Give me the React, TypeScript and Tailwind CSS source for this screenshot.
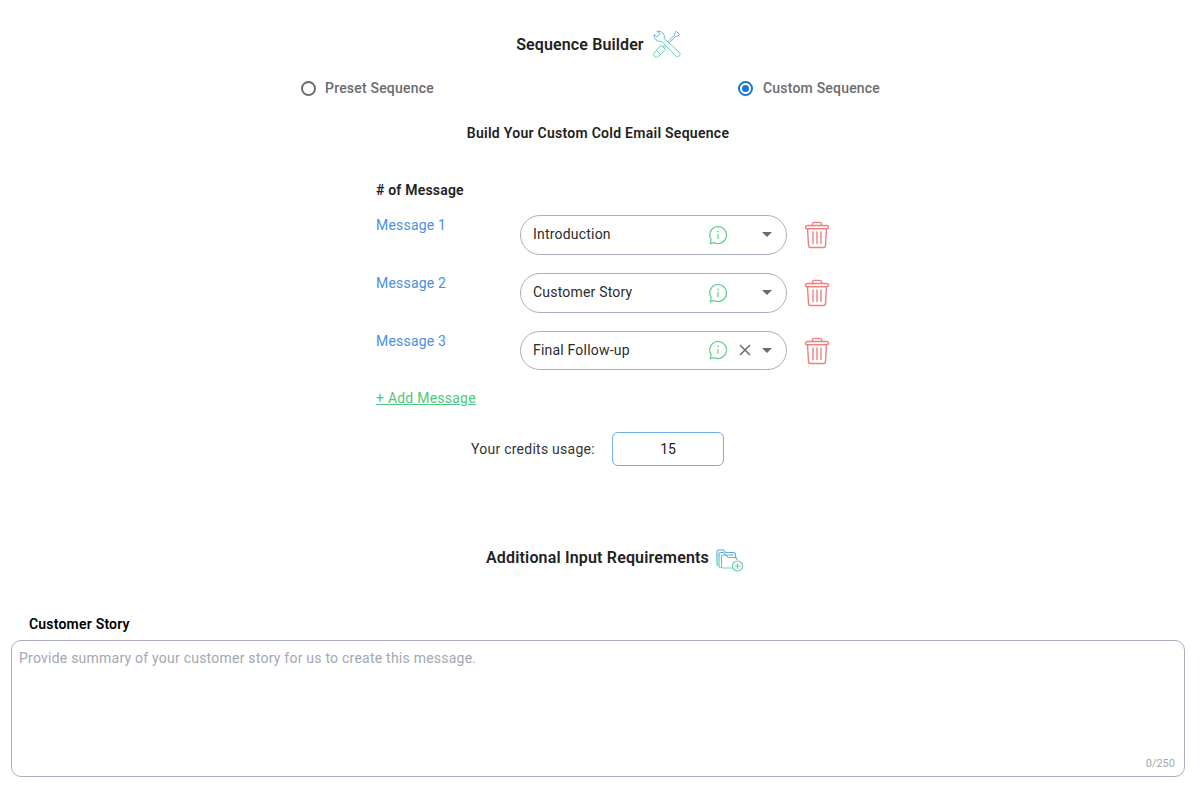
const FONT = { fontFamily: "Roboto, sans-serif" };

function ToolsIcon() {
  return (
    <svg width="28" height="28" viewBox="0 0 28 28" fill="none" strokeWidth="1" strokeLinejoin="round" strokeLinecap="round">
      <defs>
        <linearGradient id="toolsGrad" gradientUnits="userSpaceOnUse" x1="14" y1="1" x2="14" y2="27">
          <stop offset="0" stopColor="#5aa9e6" />
          <stop offset="1" stopColor="#6fdc9a" />
        </linearGradient>
      </defs>
      <g stroke="url(#toolsGrad)">
        {/* screwdriver, tip top right, handle bottom left */}
        <path d="M23.500 1.500L26.500 4.500L25 6L22.500 6.500L11.200 18.200L9.800 16.800L21 5.500L22 3z" />
        <path d="M8.500 15.500L12.500 19.500L5.500 26.500A2.400 2.400 0 0 1 1.500 22.500z" />
        <path d="M3.500 20.500l4 4" />
        {/* wrench, head top left */}
        <path
          fill="white"
          d="M4.500 1.300L7 3.800L3.800 7L1.300 4.500A5.800 5.800 0 0 0 8.600 11.200L22.600 26A2.600 2.600 0 0 0 26.400 22.400L11.200 8.600A5.800 5.800 0 0 0 4.500 1.300z"
        />
      </g>
    </svg>
  );
}

function FolderIcon() {
  return (
    <svg width="28" height="24" viewBox="0 0 28 24" fill="none" strokeWidth="1.200" strokeLinejoin="round" strokeLinecap="round">
      <defs>
        <linearGradient id="folderGrad" gradientUnits="userSpaceOnUse" x1="12" y1="1" x2="12" y2="23">
          <stop offset="0" stopColor="#5aa9e6" />
          <stop offset="1" stopColor="#6fdc9a" />
        </linearGradient>
      </defs>
      <g stroke="url(#folderGrad)">
        <path d="M2 16.500A1.500 1.500 0 0 1 1 15V2.500A1.500 1.500 0 0 1 2.500 1h5l2 2.500h8A2 2 0 0 1 19.500 5.500V9" />
        <path d="M4.500 18.500A1.500 1.500 0 0 1 3 17V5a1.500 1.500 0 0 1 1.500-1.500h3l2 2.500h8" />
        <path d="M17 19H7a1.500 1.500 0 0 1-1.500-1.500V7.500A1.500 1.500 0 0 1 7 6h3l2 2.500h7a2 2 0 0 1 2 2" />
        <circle cx="21.500" cy="17" r="5" fill="white" />
        <path d="M21.500 14.500v5M19 17h5" />
      </g>
    </svg>
  );
}

function InfoBubble() {
  return (
    <svg width="20" height="20" viewBox="0 0 20 20" fill="none" stroke="#5fd08a" strokeWidth="1.200" strokeLinejoin="round" strokeLinecap="round">
      <path d="M10 1.500a8.500 8.500 0 1 1-3.600 16.200L2.200 18.600l1-3.900A8.500 8.500 0 0 1 10 1.500z" />
      <path d="M10 9.500v4" />
      <path d="M10 6.400v.2" strokeWidth="1.600" />
    </svg>
  );
}

function TrashIcon() {
  return (
    <svg width="26" height="28" viewBox="0 0 26 28" fill="none" stroke="#f08080" strokeWidth="1.400" strokeLinejoin="round" strokeLinecap="round">
      <path d="M1.500 6.500c0-1.200.8-2 2-2h19c1.200 0 2 .8 2 2s-.8 1.200-2 1.200h-19c-1.200 0-2 0-2-1.200z" />
      <path d="M8.500 4.500V3a1.600 1.600 0 0 1 1.600-1.600h5.800A1.600 1.600 0 0 1 17.500 3v1.500" />
      <path d="M3.500 7.700l1 16.800a2 2 0 0 0 2 2h13a2 2 0 0 0 2-2l1-16.800" />
      <path d="M9 11v11.500M13 11v11.500M17 11v11.500" />
    </svg>
  );
}

function CloseIcon() {
  return (
    <svg width="12" height="12" viewBox="0 0 12 12" fill="none" stroke="#6b6b6b" strokeWidth="1.500">
      <path d="M1 1l10 10M11 1L1 11" />
    </svg>
  );
}

const messages = [
  { label: "Message 1", value: "Introduction", clear: false },
  { label: "Message 2", value: "Customer Story", clear: false },
  { label: "Message 3", value: "Final Follow-up", clear: true },
];

function MessageRow({ label, value, clear }: { label: string; value: string; clear: boolean }) {
  return (
    <div className="flex items-start h-[39.75px]">
      <div className="w-[144px] text-[14px] leading-[20px] tracking-[0.2px] text-[#4a8fe0]">{label}</div>
      <div className="flex items-center w-[267px] h-[39.75px] rounded-[20px] border border-[#a9b0bd] pl-[12px] pr-[10px]">
        <span className="text-[14px] tracking-[0.2px] text-[#2b2b2b] flex-1">{value}</span>
        <InfoBubble />
        <span className="w-[34px] flex justify-center">{clear && <CloseIcon />}</span>
        <span className="w-0 h-0 mr-[4px] border-l-[5px] border-r-[5px] border-t-[5px] border-l-transparent border-r-transparent border-t-[#6b6b6b]" />
      </div>
      <div className="ml-[17px] mt-[6px]">
        <TrashIcon />
      </div>
    </div>
  );
}

export default function App() {
  return (
    <div className="w-[1200px] h-[800px] overflow-hidden bg-white" style={FONT}>
      <div className="flex items-center justify-center h-[30px] mt-[29px] pr-[3px] gap-[9px]">
        <span className="mt-[2px] text-[16px] font-semibold tracking-[0.12px] text-[#222]">Sequence Builder</span>
        <ToolsIcon />
      </div>

      <div className="flex h-[20px] mt-[19px]">
        <label className="flex items-center ml-[301px] w-[437px] gap-[9px]">
          <span className="w-[15px] h-[15px] rounded-full border-2 border-[#6b6b6b]" />
          <span className="text-[14px] font-medium tracking-[0.2px] text-[#6b6b6b]">Preset Sequence</span>
        </label>
        <label className="flex items-center gap-[10px]">
          <span className="w-[15px] h-[15px] rounded-full border-2 border-[#1976d2] flex items-center justify-center">
            <span className="w-[7px] h-[7px] rounded-full bg-[#1976d2]" />
          </span>
          <span className="text-[14px] font-medium tracking-[0.2px] text-[#6b6b6b]">Custom Sequence</span>
        </label>
      </div>

      <div className="mt-[25px] h-[20px] pr-[4px] text-center text-[14px] leading-[20px] font-semibold tracking-[0.27px] text-[#222]">
        Build Your Custom Cold Email Sequence
      </div>

      <div className="ml-[376px] mt-[37px] text-[14px] leading-[20px] font-semibold tracking-[0.2px] text-[#222]">
        # of Message
      </div>

      <div className="ml-[376px] mt-[15px] flex flex-col gap-[18px]">
        {messages.map((m) => (
          <MessageRow key={m.label} {...m} />
        ))}
      </div>

      <div className="ml-[376px] mt-[17.75px] h-[20px] text-[14px] leading-[20px] tracking-[0.23px] text-[#4fc77f] underline">
        + Add Message
      </div>

      <div className="flex items-center mt-[24px] ml-[471px] h-[34px]">
        <span className="text-[14px] tracking-[0.25px] text-[#333] w-[141px]">Your credits usage:</span>
        <div className="w-[112px] h-[34px] rounded-[6px] border-[1.5px] border-[#6cb0ee] flex items-center justify-center text-[14px] text-[#222]">
          15
        </div>
      </div>

      <div className="flex items-center justify-center h-[28px] mt-[78px] pl-[30px] gap-[7px]">
        <span className="text-[16px] font-semibold tracking-[0.17px] text-[#222]">Additional Input Requirements</span>
        <span className="mt-[6px]">
          <FolderIcon />
        </span>
      </div>

      <div className="ml-[29px] mt-[42px] h-[20px] text-[14px] leading-[20px] font-semibold tracking-[0.2px] text-black">
        Customer Story
      </div>

      <div className="relative ml-[11px] mt-[6px] w-[1174px] h-[137px] rounded-[10px] border border-[#a9b0bd] px-[7px] py-[7px]">
        <div className="text-[14px] leading-[20px] tracking-[0.23px] text-[#a3a7b0]">
          Provide summary of your customer story for us to create this message.
        </div>
        <span className="absolute right-[9px] bottom-[4px] text-[11px] text-[#a3a7b0]">0/250</span>
      </div>
    </div>
  );
}
